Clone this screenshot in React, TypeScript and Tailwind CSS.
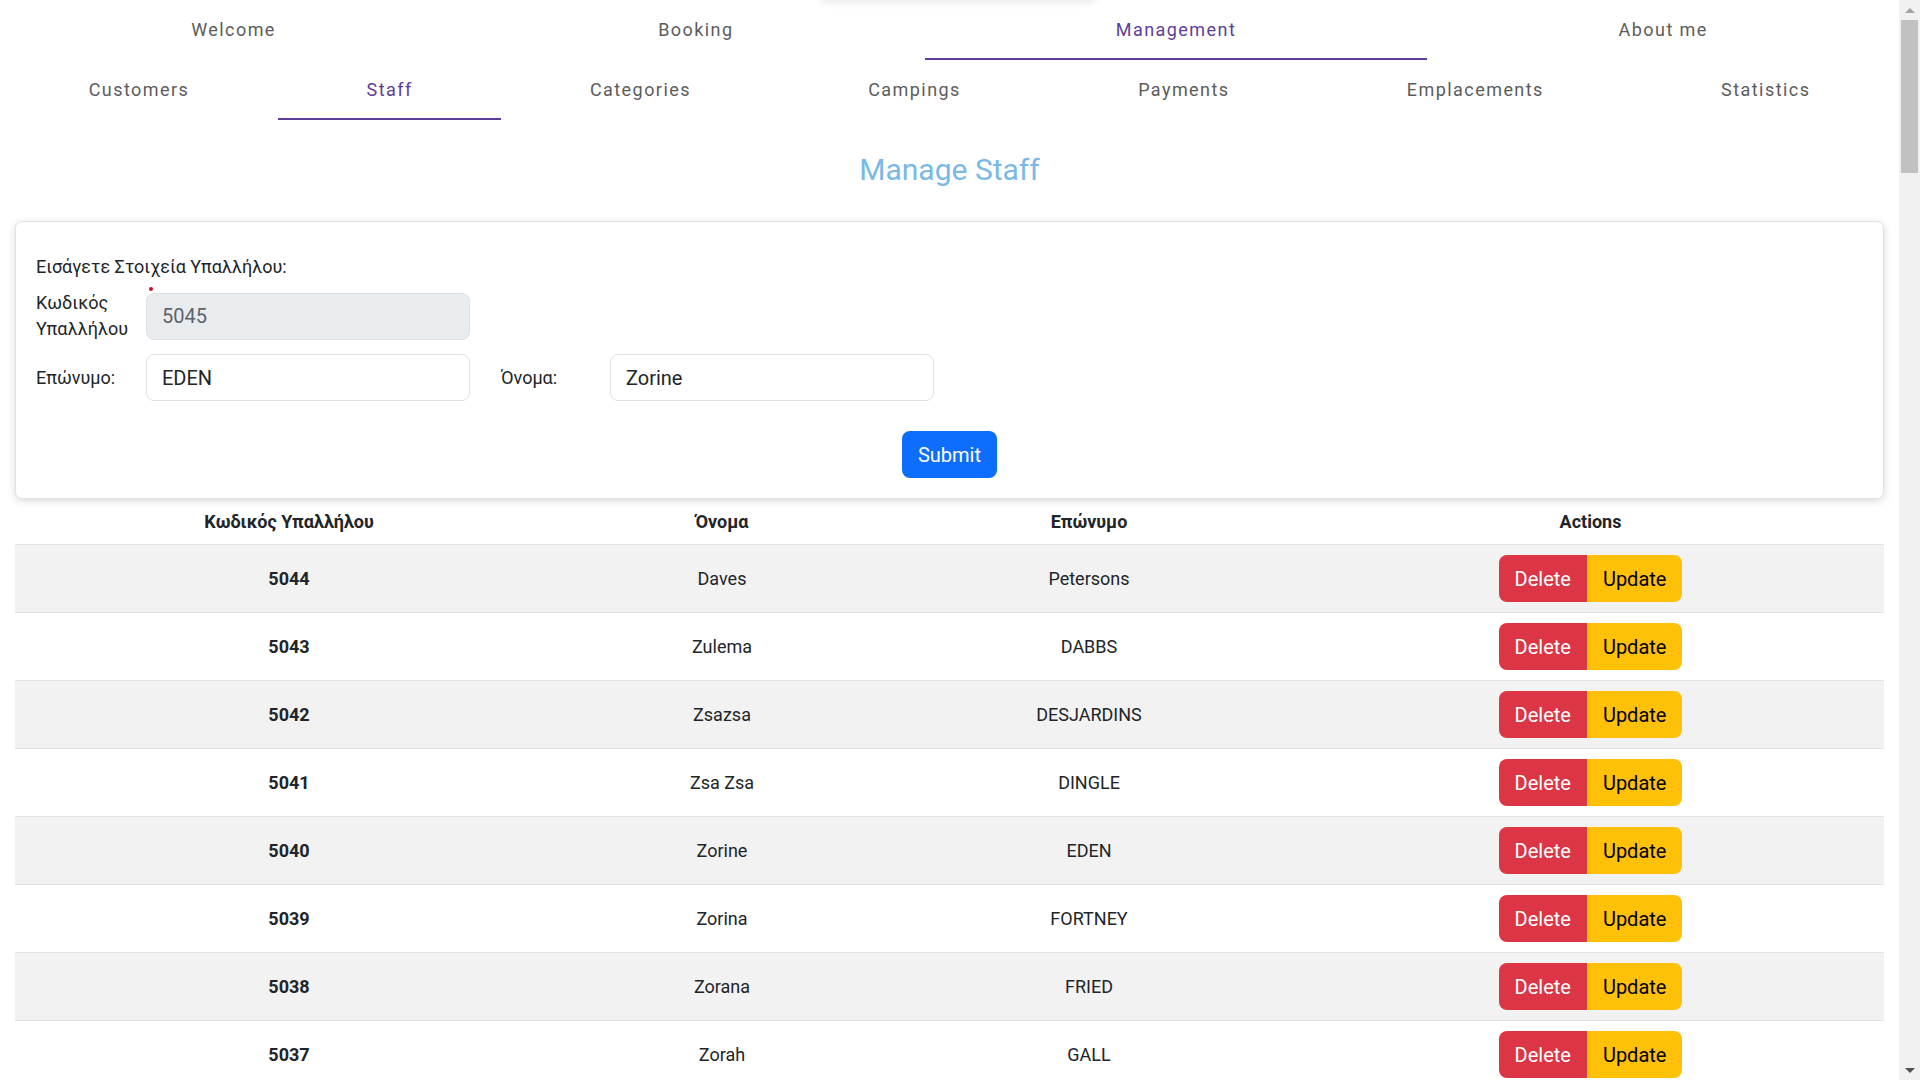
import clsx from "clsx"

const mainTabs = ["Welcome", "Booking", "Management", "About me"]
const subTabs = ["Customers", "Staff", "Categories", "Campings", "Payments", "Emplacements", "Statistics"]

const visibleStaff: [number, string, string][] = [
  [5044, "Daves", "Petersons"],
  [5043, "Zulema", "DABBS"],
  [5042, "Zsazsa", "DESJARDINS"],
  [5041, "Zsa Zsa", "DINGLE"],
  [5040, "Zorine", "EDEN"],
  [5039, "Zorina", "FORTNEY"],
  [5038, "Zorana", "FRIED"],
  [5037, "Zorah", "GALL"],
]

const moreFirst = ["Zora", "Zonnya", "Zola", "Zoe", "Zita", "Zenia", "Zena", "Zelma", "Zelda", "Zea"]
const moreLast = ["GARLAND", "GIBBS", "GOMEZ", "HALE", "HARDY", "IRWIN", "JACOBS", "KEMP", "LOWE", "MOSS"]

const staff: [number, string, string][] = [
  ...visibleStaff,
  ...Array.from({ length: 4 }, (_, i): [number, string, string] => [
    5036 - i,
    moreFirst[i % moreFirst.length],
    moreLast[(i * 3) % moreLast.length],
  ]),
]

function TabRow({ items, active }: { items: string[]; active: string }) {
  return (
    <div className="flex h-[60px]">
      {items.map((t) => (
        <div
          key={t}
          className={clsx(
            "flex-auto flex items-center justify-center px-4 border-b-2 text-[18px] tracking-[0.08em]",
            t === active ? "border-[#5e3d9a] text-[#5e3d9a]" : "border-transparent text-[#5c5c5c]"
          )}
        >
          {t}
        </div>
      ))}
    </div>
  )
}

function ScrollBar() {
  return (
    <aside className="flex w-[21px] shrink-0 flex-col items-center bg-[#f1f1f1]">
      <div className="flex h-[20px] items-center justify-center">
        <div className="h-0 w-0 border-x-[5px] border-b-[5px] border-x-transparent border-b-[#a3a3a3]" />
      </div>
      <div className="h-[153px] w-[17px] bg-[#c1c1c1]" />
      <div className="flex-1" />
      <div className="flex h-[20px] items-center justify-center">
        <div className="h-0 w-0 border-x-[5px] border-t-[5px] border-x-transparent border-t-[#505050]" />
      </div>
    </aside>
  )
}

const inputCls = "w-[324px] h-[47px] rounded-[8px] border border-[#dee2e6] px-[15px] text-[20px] outline-none"

export default function App() {
  return (
    <div className="flex h-screen overflow-hidden bg-white font-['Roboto',sans-serif] text-[#212529]">
      <main className="relative flex-1 overflow-hidden">
        {/* shadow of something sitting above the viewport */}
        <div className="absolute left-[820px] top-[-40px] h-[40px] w-[276px] rounded-[6px] shadow-[0_2px_8px_rgba(0,0,0,0.10)]" />

        <TabRow items={mainTabs} active="Management" />
        <TabRow items={subTabs} active="Staff" />

        <h1 className="mt-[32px] text-center text-[30px] leading-[35px] text-[#7ab8e6]">Manage Staff</h1>

        <div className="mx-[15px] mt-[34px] rounded-[7px] border border-[#e2e2e2] bg-white px-[20px] pt-[31px] pb-[20px] shadow-[0_2px_8px_rgba(0,0,0,0.15)]">
          <div className="text-[18px] leading-[27px]">Εισάγετε Στοιχεία Υπαλλήλου:</div>

          <div className="mt-[10px] flex items-center">
            <label className="w-[110px] text-[18px] leading-[26px]">Κωδικός Υπαλλήλου</label>
            <div className="relative">
              <span className="absolute left-[3px] top-[-6px] h-[4px] w-[4px] rounded-full bg-[#c8102e]" />
              <input disabled defaultValue="5045" className={clsx(inputCls, "bg-[#e9ecef] text-[#5c636a]")} />
            </div>
          </div>

          <div className="mt-[12px] flex items-center">
            <label className="w-[110px] text-[18px] leading-[26px]">Επώνυμο:</label>
            <input defaultValue="EDEN" className={clsx(inputCls, "bg-white text-[#212529]")} />
            <label className="ml-[31px] w-[109px] text-[18px] leading-[26px]">Όνομα:</label>
            <input defaultValue="Zorine" className={clsx(inputCls, "bg-white text-[#212529]")} />
          </div>

          <div className="mt-[30px] flex justify-center">
            <button className="h-[47px] rounded-[8px] bg-[#0d6efd] px-4 text-[20px] text-white">Submit</button>
          </div>
        </div>

        <div className="mx-[15px] text-[18px]">
          <div className="grid h-[46px] grid-cols-[548px_318px_416px_1fr] items-center border-b border-[#dee2e6] text-center font-bold">
            <div>Κωδικός Υπαλλήλου</div>
            <div>Όνομα</div>
            <div>Επώνυμο</div>
            <div>Actions</div>
          </div>
          {staff.map(([id, first, last], i) => (
            <div
              key={id}
              className={clsx(
                "grid h-[68px] grid-cols-[548px_318px_416px_1fr] items-center border-b border-[#dee2e6] text-center",
                i % 2 === 0 ? "bg-[#f2f2f2]" : "bg-white"
              )}
            >
              <div className="font-bold">{id}</div>
              <div>{first}</div>
              <div>{last}</div>
              <div className="flex justify-center">
                <div className="inline-flex overflow-hidden rounded-[8px] text-[20px]">
                  <button className="h-[47px] bg-[#dc3545] px-4 text-white">Delete</button>
                  <button className="h-[47px] bg-[#ffc107] px-4 text-black">Update</button>
                </div>
              </div>
            </div>
          ))}
        </div>
      </main>
      <ScrollBar />
    </div>
  )
}
